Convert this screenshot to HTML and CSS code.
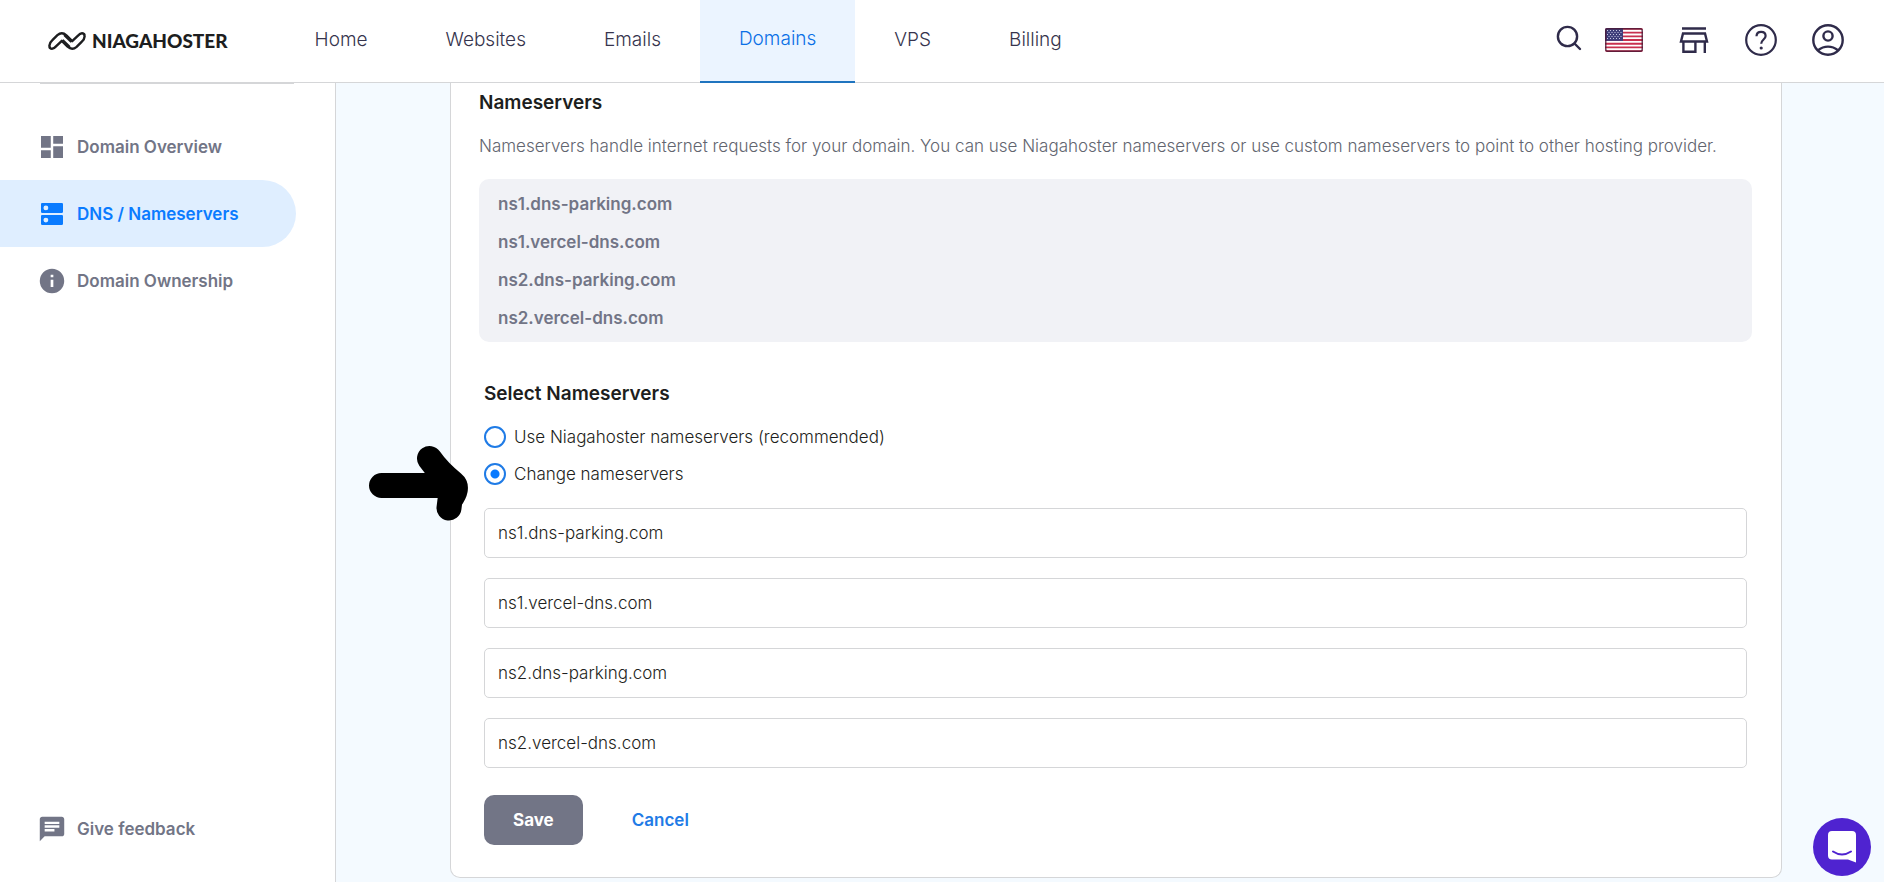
FILE: index.html
```html
<!DOCTYPE html>
<html lang="en">
<head>
<meta charset="utf-8">
<meta name="viewport" content="width=device-width, initial-scale=1">
<title>DNS / Nameservers - Niagahoster</title>
<link rel="stylesheet" href="styles.css">
</head>
<body>
<header class="topbar">
  <a class="logo" href="#" aria-label="Niagahoster">
    <svg class="logo-mark" viewBox="0 0 38 18" width="38" height="18" fill="none" stroke="#1d1e20" stroke-linecap="round" stroke-linejoin="round" aria-hidden="true">
      <path stroke-width="2.400" d="M1.800 15.400C.6 12.600 2.200 10.200 4.400 8.200L9.400 3.200C12.400.6 15.600.8 18.400 3.400L24.200 9.200L30 3.600C32.200 1.200 34.600.8 36.200 2.200"/>
      <path stroke-width="2.400" d="M36.200 2.600C37.400 5.400 35.800 7.800 33.600 9.800L28.600 14.800C25.600 17.400 22.400 17.200 19.600 14.600L13.800 8.800L8 14.400C5.800 16.800 3.400 17.200 1.800 15.800"/>
      <path stroke-width="1.600" d="M15.400 8.200L21.600 14.400M22.600 9.800L16.400 3.600"/>
    </svg>
    <span class="logo-text">NIAGAHOSTER</span>
  </a>
  <nav class="tabs" aria-label="Main">
    <a class="tab" href="#">Home</a>
    <a class="tab" href="#">Websites</a>
    <a class="tab" href="#">Emails</a>
    <a class="tab tab-active" href="#" aria-current="page">Domains</a>
    <a class="tab" href="#">VPS</a>
    <a class="tab" href="#">Billing</a>
  </nav>
  <div class="tools">
    <div class="tools-pair">
      <button class="tool" type="button" aria-label="Search">
        <svg viewBox="0 0 32 32" width="32" height="32" fill="none" stroke="#2f2b4a" stroke-width="2.400" stroke-linecap="round"><circle cx="14.500" cy="12.500" r="9.600"/><path d="M21.500 19.500L27 25"/></svg>
      </button>
      <button class="tool" type="button" aria-label="Language">
        <svg viewBox="0 0 38 24" width="38" height="24">
          <defs><clipPath id="flag"><rect width="38" height="24" rx="2"/></clipPath></defs>
          <g clip-path="url(#flag)">
            <rect width="38" height="24" fill="#fff"/>
            <path stroke="#c8304f" stroke-width="1.850" d="M0 .9H38M0 4.600H38M0 8.300H38M0 12H38M0 15.700H38M0 19.400H38M0 23.100H38"/>
            <rect width="18" height="12.900" fill="#3f3f7c"/>
            <path stroke="#c9c9e4" stroke-width="1" stroke-dasharray="1 2" d="M2 2.500H17M3.500 4.500H17M2 6.500H17M3.500 8.500H17M2 10.500H17"/>
          </g>
          <rect x=".75" y=".75" width="36.500" height="22.500" rx="2" fill="none" stroke="#4a1733" stroke-width="1.500" stroke-opacity=".8"/>
        </svg>
      </button>
    </div>
    <button class="tool" type="button" aria-label="Store">
      <svg viewBox="0 0 32 32" width="32" height="32" fill="none" stroke="#2f2b4a" stroke-width="2.400"><path d="M4 4.500H28M5 9.500H27L29 17.500H3zM5.400 17.500V27.800H17.400V17.500M26.800 17.500V29"/></svg>
    </button>
    <button class="tool" type="button" aria-label="Help">
      <svg viewBox="0 0 32 32" width="32" height="32" fill="none" stroke="#2f2b4a" stroke-width="2.200"><circle cx="16" cy="16" r="14.800"/><path d="M11.500 12.200C11.600 9.400 13.500 7.800 16.100 7.800C18.800 7.800 20.600 9.500 20.600 11.900C20.600 15.400 16.200 15.600 16.200 19.800"/><circle cx="16.200" cy="24" r="1.600" fill="#2f2b4a" stroke="none"/></svg>
    </button>
    <button class="tool" type="button" aria-label="Account">
      <svg viewBox="0 0 32 32" width="32" height="32" fill="none" stroke="#2f2b4a" stroke-width="2.400"><circle cx="16" cy="16" r="14.700"/><circle cx="16" cy="12" r="4.600"/><path d="M6 26.200Q10.500 22.600 16 22.600T26 26.200"/></svg>
    </button>
  </div>
</header>

<div class="shell">
  <aside class="sidebar">
    <hr class="side-rule">
    <nav class="side-nav" aria-label="Domain">
      <a class="side-link" href="#">
        <svg viewBox="3 3 18 18" width="22" height="22" fill="currentColor"><path d="M3 12.700h8V3H3zM3 21h8v-6.300H3zM13 21h8v-9.700h-8zM13 3v6.300h8V3z"/></svg>
        Domain Overview
      </a>
      <a class="side-link side-link-active" href="#" aria-current="page">
        <svg viewBox="3 3 18 18" width="22" height="22" fill="currentColor"><path fill-rule="evenodd" d="M20 12.800H4c-.55 0-1 .45-1 1V20c0 .55.45 1 1 1h16c.55 0 1-.45 1-1v-6.200c0-.55-.45-1-1-1zM7 19a2 2 0 1 1 0-4 2 2 0 0 1 0 4zM20 3H4c-.55 0-1 .45-1 1v6.200c0 .55.45 1 1 1h16c.55 0 1-.45 1-1V4c0-.55-.45-1-1-1zM7 9a2 2 0 1 1 0-4 2 2 0 0 1 0 4z"/></svg>
        DNS / Nameservers
      </a>
      <a class="side-link" href="#">
        <svg viewBox="3 3 18 18" width="22" height="22" fill="currentColor" overflow="visible"><path fill-rule="evenodd" d="M12 2a10 10 0 1 0 0 20 10 10 0 0 0 0-20zm1.100 15h-2.200v-6h2.200zm0-8h-2.200V6.800h2.200z"/></svg>
        Domain Ownership
      </a>
    </nav>
    <a class="side-link side-feedback" href="#">
      <svg viewBox="3 3 18 18" width="22" height="22" fill="currentColor" overflow="visible"><path fill-rule="evenodd" d="M20 2H4c-1.100 0-1.990.9-1.990 2L2 22l4-4h14c1.100 0 2-.9 2-2V4c0-1.100-.9-2-2-2zM6 9h12v2H6zm8 5H6v-2h8zm4-6H6V6h12z"/></svg>
      Give feedback
    </a>
  </aside>

  <main class="main">
    <section class="card">
      <h2 class="title">Nameservers</h2>
      <p class="lead">Nameservers handle internet requests for your domain. You can use Niagahoster nameservers or use custom nameservers to point to other hosting provider.</p>
      <ul class="current">
        <li>ns1.dns-parking.com</li>
        <li>ns1.vercel-dns.com</li>
        <li>ns2.dns-parking.com</li>
        <li>ns2.vercel-dns.com</li>
      </ul>
      <form class="form">
        <h2 class="title" id="select-title">Select Nameservers</h2>
        <div class="choices" role="radiogroup" aria-labelledby="select-title">
          <label class="choice"><input class="radio" type="radio" name="mode">Use Niagahoster nameservers (recommended)</label>
          <label class="choice"><input class="radio" type="radio" name="mode" checked>Change nameservers</label>
        </div>
        <div class="fields">
          <input class="field" type="text" aria-label="Nameserver 1" value="ns1.dns-parking.com">
          <input class="field" type="text" aria-label="Nameserver 2" value="ns1.vercel-dns.com">
          <input class="field" type="text" aria-label="Nameserver 3" value="ns2.dns-parking.com">
          <input class="field" type="text" aria-label="Nameserver 4" value="ns2.vercel-dns.com">
        </div>
        <div class="actions">
          <button class="btn btn-save" type="button">Save</button>
          <button class="btn btn-cancel" type="button">Cancel</button>
        </div>
        <svg class="pointer" viewBox="0 0 100 76" width="100" height="76" fill="none" stroke="#000" stroke-width="25" stroke-linecap="round" stroke-linejoin="round" aria-hidden="true"><path d="M12.500 40.500H86M60.500 13.500Q70 27 84 38Q90 43 81 55L80 63"/></svg>
      </form>
    </section>
  </main>
</div>

<button class="chat" type="button" aria-label="Open chat">
  <svg viewBox="0 0 28 32" width="28" height="32"><path fill="#fff" d="M4 0H24a4 4 0 0 1 4 4V31.500L20 28.500H4a4 4 0 0 1-4-4V4A4 4 0 0 1 4 0z"/><path fill="none" stroke="#4f23d0" stroke-width="2" stroke-linecap="round" d="M5 20.500Q14 26.500 23 20.500"/></svg>
</button>
</body>
</html>
```
FILE: styles.css
```css
* { box-sizing: border-box; }

body {
  margin: 0;
  background: #f4faff;
  color: #1d1e20;
  font-family: Inter, "Liberation Sans", sans-serif;
  font-size: 17px;
  font-weight: 300;
  line-height: 24px;
}

a { color: inherit; text-decoration: none; }
button, input { font: inherit; }
svg { display: block; flex: none; }

.topbar {
  position: sticky;
  top: 0;
  z-index: 2;
  display: flex;
  align-items: stretch;
  height: 83px;
  padding: 0 40px 0 48px;
  background: #fff;
  box-shadow: inset 0 -1px #d5d6d8;
}

.logo {
  display: flex;
  align-items: center;
  gap: 6px;
  margin-right: 48px;
  padding-bottom: 2px;
}
.logo-text {
  font-family: Lato, sans-serif;
  font-size: 19px;
  font-weight: 900;
}

.tabs { display: flex; }
.tab {
  display: flex;
  align-items: center;
  padding: 0 39px 3px;
  color: #36344d;
  font-size: 19px;
}
.tab-active {
  background: #ebf4ff;
  border-bottom: 2px solid #1f74bf;
  color: #0a6fe6;
}

.tools {
  display: flex;
  align-items: center;
  gap: 35px;
  margin-left: auto;
  padding-bottom: 3px;
}
.tools-pair { display: flex; align-items: center; gap: 20px; }
.tool { padding: 0; border: 0; background: none; }

.shell { display: flex; align-items: stretch; }

.sidebar {
  display: flex;
  flex-direction: column;
  width: 336px;
  flex: none;
  background: #fff;
  border-right: 1px solid #d5d6d8;
}
.side-rule {
  width: 254px;
  height: 1px;
  margin: 0 0 29px 40px;
  border: 0;
  background: #d5d6d8;
}
.side-nav { flex: 1; }
.side-link {
  display: flex;
  align-items: center;
  gap: 14px;
  width: 296px;
  height: 67px;
  padding-left: 41px;
  border-radius: 0 34px 34px 0;
  color: #727586;
  font-weight: 600;
}
.side-link-active { background: #dfeeff; color: #0a7bff; }
.side-feedback { margin-bottom: 20px; }

.main { flex: 1; min-width: 0; padding: 0 102px 4px 114px; }

.card {
  padding: 8px 29px 32px 28px;
  background: #fff;
  border: 1px solid #d5d6d8;
  border-top: 0;
  border-radius: 0 0 10px 10px;
}
.title { margin: 0; font-size: 19px; font-weight: 600; }
.lead { margin: 19px 0 21px; color: #62656f; }

.current {
  margin: 0 0 40px;
  padding: 6px 19px 5px;
  border-radius: 10px;
  background: #f1f2f6;
  color: #727586;
  font-weight: 600;
  line-height: 38px;
  list-style: none;
}

.form { position: relative; padding: 0 5px; }
.choices { margin: 12px 0 16px; }
.choice {
  display: flex;
  align-items: center;
  gap: 8px;
  width: max-content;
  height: 37px;
}
.radio {
  appearance: none;
  width: 22px;
  height: 22px;
  margin: 0;
  border: 2px solid #1f7be6;
  border-radius: 50%;
}
.radio:checked { background: radial-gradient(circle, #0a7bff 4px, transparent 5px); }

.fields { display: grid; gap: 20px; }
.field {
  width: 100%;
  height: 50px;
  padding: 0 13px;
  border: 1px solid #d5d6d8;
  border-radius: 5px;
  background: #fff;
  color: #1d1e20;
}

.actions { display: flex; gap: 20px; margin-top: 27px; }
.btn {
  height: 50px;
  padding: 0 29px;
  border: 0;
  border-radius: 10px;
  background: none;
  font-weight: 600;
}
.btn-save { background: #727586; color: #fff; font-weight: 700; }
.btn-cancel { color: #1f7be6; }

/* Hand-drawn arrow lying over the card's edge */
.pointer {
  position: absolute;
  top: 63px;
  left: -110px;
}

.chat {
  position: fixed;
  right: 13px;
  bottom: 6px;
  z-index: 3;
  display: grid;
  place-items: center;
  width: 58px;
  height: 58px;
  padding: 0;
  border: 0;
  border-radius: 50%;
  background: #4f23d0;
}
```
